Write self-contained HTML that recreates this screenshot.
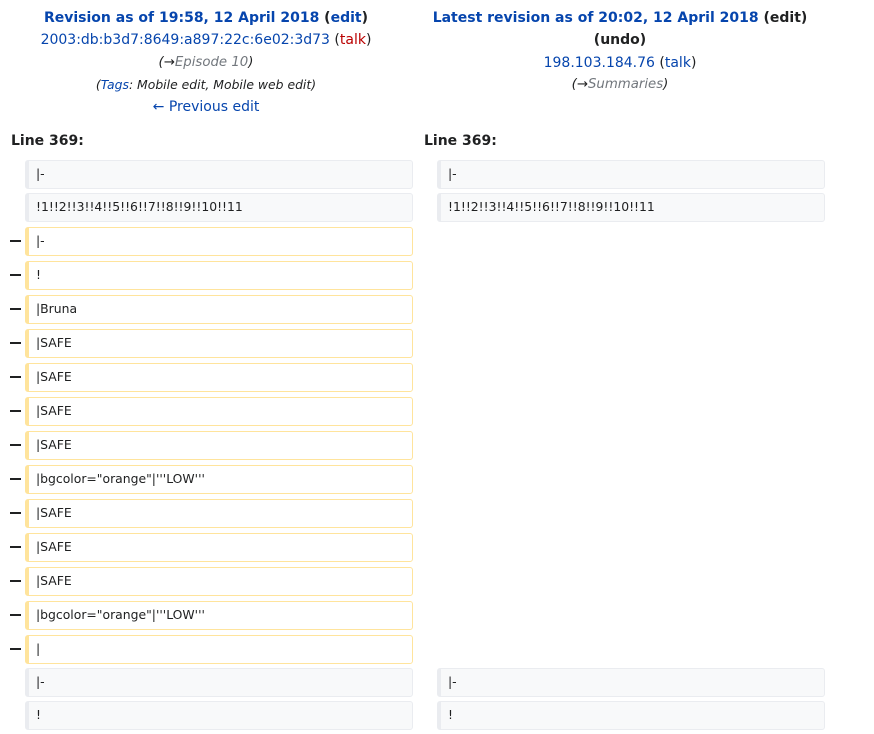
<!DOCTYPE html>
<html><head><meta charset="utf-8"><style>
body{margin:0;width:874px;height:734px;background:#fff;font-family:"DejaVu Sans","Liberation Sans",sans-serif;color:#202122;position:relative;overflow:hidden}
a{color:#0645ad;text-decoration:none}
.hd{position:absolute;text-align:center;white-space:nowrap}
.t{font-weight:bold;font-size:14px;line-height:22.3px}
.s{font-size:14px;line-height:22.3px}
.c{font-size:13.3px;font-style:italic;line-height:22.3px;color:#202122}
.c span{color:#72777d}
.c b{font-weight:normal;color:#202122}
.g{font-size:12.4px;font-style:italic;line-height:22.3px}
.ln{position:absolute;top:133px;font-weight:bold;font-size:14px}
.b{position:absolute;height:29px;box-sizing:border-box;border:1px solid #eaecf0;border-left:4px solid #eaecf0;border-radius:3px;background:#f8f9fa;font-size:12.4px;line-height:25px;padding-left:7px;white-space:pre}
.d{background:#fff;border-color:#ffe49c}
.m{position:absolute;left:10px;width:11px;height:2px;background:#202122}
</style></head><body>
<div class="hd" style="left:0;width:412px;top:7px">
<div class="t"><a href="#">Revision as of 19:58, 12 April 2018</a> (<a href="#">edit</a>)</div>
<div class="s"><a href="#">2003:db:b3d7:8649:a897:22c:6e02:3d73</a> (<a href="#" style="color:#ba0000">talk</a>)</div>
<div class="c">(<b>→</b><span>Episode 10</span>)</div>
<div class="g">(<a href="#">Tags</a>: Mobile edit, Mobile web edit)</div>
<div class="s"><a href="#">← Previous edit</a></div>
</div>
<div class="hd" style="left:413px;width:414px;top:7px">
<div class="t"><a href="#">Latest revision as of 20:02, 12 April 2018</a> (<a href="#" style="color:#202122">edit</a>)</div>
<div class="t">(<a href="#" style="color:#202122">undo</a>)</div>
<div class="s"><a href="#">198.103.184.76</a> (<a href="#">talk</a>)</div>
<div class="c">(<b>→</b><span>Summaries</span>)</div>
</div>
<div class="ln" style="left:11px">Line 369:</div>
<div class="ln" style="left:424px">Line 369:</div>
<div class="b" style="left:25px;width:388px;top:160px">|-</div>
<div class="b" style="left:25px;width:388px;top:193px">!1!!2!!3!!4!!5!!6!!7!!8!!9!!10!!11</div>
<div class="b" style="left:437px;width:388px;top:160px">|-</div>
<div class="b" style="left:437px;width:388px;top:193px">!1!!2!!3!!4!!5!!6!!7!!8!!9!!10!!11</div>
<div class="b d" style="left:25px;width:388px;top:227px">|-</div><div class="m" style="top:240px"></div>
<div class="b d" style="left:25px;width:388px;top:261px">!</div><div class="m" style="top:274px"></div>
<div class="b d" style="left:25px;width:388px;top:295px">|Bruna</div><div class="m" style="top:308px"></div>
<div class="b d" style="left:25px;width:388px;top:329px">|SAFE</div><div class="m" style="top:342px"></div>
<div class="b d" style="left:25px;width:388px;top:363px">|SAFE</div><div class="m" style="top:376px"></div>
<div class="b d" style="left:25px;width:388px;top:397px">|SAFE</div><div class="m" style="top:410px"></div>
<div class="b d" style="left:25px;width:388px;top:431px">|SAFE</div><div class="m" style="top:444px"></div>
<div class="b d" style="left:25px;width:388px;top:465px">|bgcolor="orange"|'''LOW'''</div><div class="m" style="top:478px"></div>
<div class="b d" style="left:25px;width:388px;top:499px">|SAFE</div><div class="m" style="top:512px"></div>
<div class="b d" style="left:25px;width:388px;top:533px">|SAFE</div><div class="m" style="top:546px"></div>
<div class="b d" style="left:25px;width:388px;top:567px">|SAFE</div><div class="m" style="top:580px"></div>
<div class="b d" style="left:25px;width:388px;top:601px">|bgcolor="orange"|'''LOW'''</div><div class="m" style="top:614px"></div>
<div class="b d" style="left:25px;width:388px;top:635px">|</div><div class="m" style="top:648px"></div>
<div class="b" style="left:25px;width:388px;top:668px">|-</div>
<div class="b" style="left:25px;width:388px;top:701px">!</div>
<div class="b" style="left:437px;width:388px;top:668px">|-</div>
<div class="b" style="left:437px;width:388px;top:701px">!</div>
</body></html>
